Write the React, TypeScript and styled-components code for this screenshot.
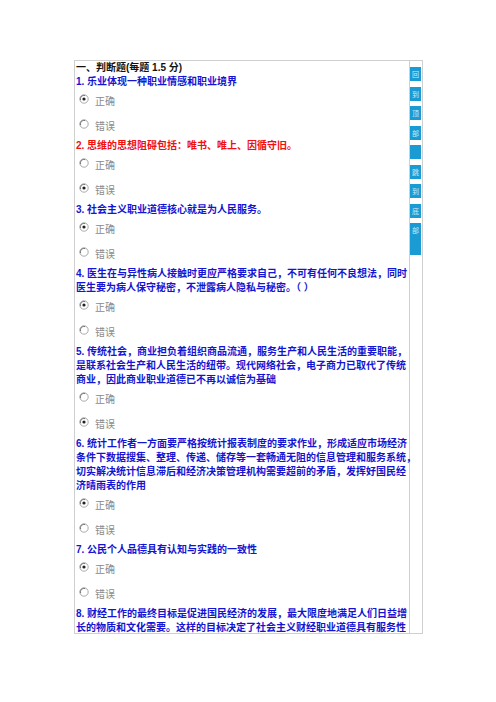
import styled, { createGlobalStyle } from "styled-components"

const GlobalStyle = createGlobalStyle`
  body {
    margin: 0;
    background: #ffffff;
    font-family: "Liberation Sans", "Noto Sans CJK SC", sans-serif;
  }
`

type Answer = "yes" | "no"

interface Question {
  lines: string[]
  answer?: Answer
  wrong?: boolean
}

// the last item runs past the bottom of the sheet, so its choices are not drawn
const questions: Question[] = [
  { lines: ["1. 乐业体现一种职业情感和职业境界"], answer: "yes" },
  { lines: ["2. 思维的思想阻碍包括：唯书、唯上、因循守旧。"], answer: "no", wrong: true },
  { lines: ["3. 社会主义职业道德核心就是为人民服务。"], answer: "yes" },
  {
    lines: [
      "4. 医生在与异性病人接触时更应严格要求自己，不可有任何不良想法，同时",
      "医生要为病人保守秘密，不泄露病人隐私与秘密。（ ）"
    ],
    answer: "yes"
  },
  {
    lines: [
      "5. 传统社会，商业担负着组织商品流通，服务生产和人民生活的重要职能，",
      "是联系社会生产和人民生活的纽带。现代网络社会，电子商力已取代了传统",
      "商业，因此商业职业道德已不再以诚信为基础"
    ],
    answer: "no"
  },
  {
    lines: [
      "6. 统计工作者一方面要严格按统计报表制度的要求作业，形成适应市场经济",
      "条件下数据搜集、整理、传递、储存等一套畅通无阻的信息管理和服务系统，",
      "切实解决统计信息滞后和经济决策管理机构需要超前的矛盾，发挥好国民经",
      "济晴雨表的作用"
    ],
    answer: "yes"
  },
  { lines: ["7. 公民个人品德具有认知与实践的一致性"], answer: "yes" },
  {
    lines: [
      "8. 财经工作的最终目标是促进国民经济的发展，最大限度地满足人们日益增",
      "长的物质和文化需要。这样的目标决定了社会主义财经职业道德具有服务性"
    ]
  }
]

const navItems = ["回", "到", "顶", "部", "", "跳", "到", "底", "部"]

const Page = styled.div`
  padding: 60px 0 0 74px;
`

const Sheet = styled.div`
  display: flex;
  width: 347px;
  height: 572px;
  border: 1px solid #cfcfcf;
  overflow: hidden;
`

const Main = styled.div`
  width: 335px;
  padding-left: 1px;
  box-sizing: border-box;
  border-right: 1px solid #cfcfcf;
`

const Heading = styled.div`
  height: 14px;
  line-height: 14px;
  font-size: 10px;
  font-weight: 700;
  color: #111;
  white-space: nowrap;
`

const Stem = styled.div<{ $wrong?: boolean }>`
  font-size: 10px;
  line-height: 14px;
  font-weight: 700;
  color: ${p => (p.$wrong ? "#f01010" : "#1414d2")};
  white-space: nowrap;
`

const Option = styled.div`
  display: flex;
  align-items: center;
  height: 25px;
  padding-left: 3px;
  gap: 6px;
`

const Radio = styled.svg`
  flex: none;
  width: 10px;
  height: 10px;
  margin-bottom: 6px;
`

const OptionLabel = styled.span`
  font-size: 10px;
  color: #8a8a8a;
  line-height: 14px;
  padding-top: 1px;
`

const Side = styled.div`
  width: 11px;
  padding-top: 6px;
  display: flex;
  flex-direction: column;
  gap: 5.5px;
`

const NavBlock = styled.div<{ $tall?: boolean }>`
  height: ${p => (p.$tall ? 32 : 14)}px;
  background: #1b9bd3;
  color: #cdeaf7;
  font-size: 7px;
  line-height: 14px;
  text-align: center;
  font-family: "Noto Sans CJK SC", sans-serif;
`

const RadioIcon = ({ checked }: { checked: boolean }) => (
  <Radio viewBox="0 0 10 10">
    <circle cx="5" cy="5" r="4.2" fill="#fff" stroke="#a0a0a0" strokeWidth="0.9" />
    <path d="M1.6 6.2 A3.6 3.6 0 0 1 6.2 1.6" fill="none" stroke="#6a6a6a" strokeWidth="0.9" />
    {checked && <circle cx="5" cy="5" r="1.6" fill="#222" />}
  </Radio>
)

const QuestionBlock = ({ q }: { q: Question }) => (
  <div>
    <Stem $wrong={q.wrong}>
      {q.lines.map((line, i) => (
        <div key={i}>{line}</div>
      ))}
    </Stem>
    {q.answer && (
      <>
        <Option>
          <RadioIcon checked={q.answer === "yes"} />
          <OptionLabel>正确</OptionLabel>
        </Option>
        <Option>
          <RadioIcon checked={q.answer === "no"} />
          <OptionLabel>错误</OptionLabel>
        </Option>
      </>
    )}
  </div>
)

export default function App() {
  return (
    <>
      <GlobalStyle />
      <Page>
        <Sheet>
          <Main>
            <Heading>一、判断题(每题 1.5 分)</Heading>
            {questions.map((q, i) => (
              <QuestionBlock key={i} q={q} />
            ))}
          </Main>
          <Side>
            {navItems.map((t, i) => (
              <NavBlock key={i} $tall={i === navItems.length - 1}>
                {t}
              </NavBlock>
            ))}
          </Side>
        </Sheet>
      </Page>
    </>
  )
}
